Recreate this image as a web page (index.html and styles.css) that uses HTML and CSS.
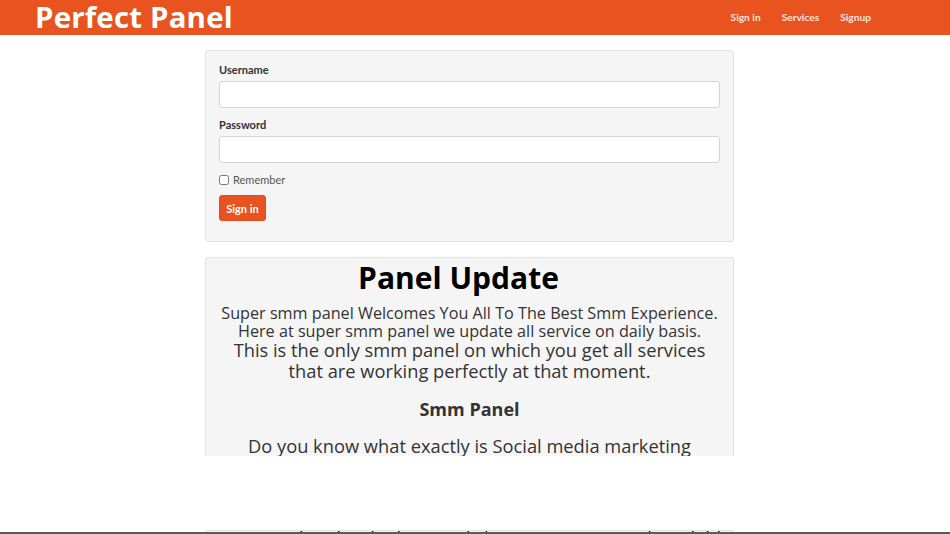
FILE: index.html
```html
<!DOCTYPE html>
<html lang="en">
<head>
<meta charset="utf-8">
<title>Perfect Panel</title>
<link rel="stylesheet" href="styles.css">
</head>
<body>
<nav class="navbar">
  <a class="brand" href="#">Perfect Panel</a>
  <ul class="nav">
    <li><a href="#">Sign in</a></li>
    <li><a href="#">Services</a></li>
    <li><a href="#">Signup</a></li>
  </ul>
</nav>
<div class="page">
  <div class="container">
    <form class="well login">
      <label class="label" for="u">Username</label>
      <input class="input" id="u" type="text">
      <label class="label" for="p">Password</label>
      <input class="input" id="p" type="password">
      <label class="check"><input type="checkbox" class="box"> Remember</label>
      <button class="btn" type="button">Sign in</button>
    </form>
    <div class="well content">
      <h1 class="title">Panel Update</h1>
      <p class="p1">Super smm panel Welcomes You All To The Best Smm Experience.<br>Here at super smm panel we update all service on daily basis.</p>
      <p class="p2">This is the only smm panel on which you get all services<br>that are working perfectly at that moment.</p>
      <h2 class="sub">Smm Panel</h2>
      <p class="p3">Do you know what exactly is Social media marketing</p>
    </div>
    <div class="well next">
      <p class="p3">Smm panel and is the best and cheapest smm panel available</p>
    </div>
  </div>
</div>
<div class="bottom-bar"></div>
</body>
</html>
```
FILE: styles.css
```css
* { box-sizing: border-box; }
html, body { margin: 0; padding: 0; }
body {
  width: 950px;
  height: 534px;
  overflow: hidden;
  background: #fff;
  font-family: "Open Sans", "Noto Sans", sans-serif;
  color: #333;
}
.navbar {
  height: 35px;
  background: #e8531f;
  display: flex;
  align-items: center;
  justify-content: space-between;
  padding: 0 79px 0 35px;
}
.brand {
  color: #fff;
  text-decoration: none;
  font-weight: 700;
  font-size: 29.4px;
  line-height: 35px;
  letter-spacing: 0.2px;
  margin-top: -1px;
}
.nav {
  list-style: none;
  margin: -2px 0 0;
  padding: 0;
  display: flex;
  gap: 21px;
  line-height: 14px;
}
.nav li { line-height: 14px; }
.nav a {
  display: block;
  color: #fbe3da;
  text-decoration: none;
  font-family: Lato, "Open Sans", sans-serif;
  font-size: 10.2px;
  font-weight: 700;
  line-height: 14px;
}
.page {
  padding: 15px 11px 0 0;
  display: flex;
  justify-content: center;
}
.container {
  width: 529px;
}
.well {
  background: #f5f5f5;
  border: 1px solid #e3e3e3;
  border-radius: 3px;
}
.login {
  display: flex;
  flex-direction: column;
  align-items: flex-start;
  padding: 12px 13px 20px;
  margin-bottom: 15px;
}
.label {
  font-family: Lato, "Open Sans", sans-serif;
  font-size: 11px;
  font-weight: 700;
  color: #333;
  line-height: 14px;
  margin-bottom: 4px;
}
.input {
  width: 100%;
  height: 27px;
  background: #fff;
  border: 1px solid #d4d4d4;
  border-radius: 3px;
  margin: 0 0 10px;
}
.check {
  display: flex;
  align-items: center;
  gap: 4px;
  font-family: Lato, "Open Sans", sans-serif;
  font-size: 11px;
  color: #555;
  line-height: 14px;
  margin: 0 0 8px;
}
.box {
  margin: 0;
  width: 10px;
  height: 10px;
}
.btn {
  background: #e8531f;
  color: #fff;
  border: 1px solid #e04d1a;
  border-radius: 3px;
  font-family: Lato, "Open Sans", sans-serif;
  font-size: 11px;
  font-weight: 700;
  width: 47px;
  height: 26px;
  padding: 0;
}
.content {
  height: 199px;
  overflow: hidden;
  border-bottom: none;
  border-radius: 3px 3px 0 0;
  text-align: center;
  padding: 0 12px;
}
.title {
  margin: 0 0 7px;
  padding: 1px 22px 0 0;
  font-size: 30px;
  line-height: 38px;
  font-weight: 700;
  color: #000;
}
.p1 {
  margin: 0;
  font-size: 16.2px;
  line-height: 18px;
  color: #333;
}
.p2 {
  margin: 0;
  font-size: 18.3px;
  line-height: 20.5px;
  color: #333;
}
.sub {
  margin: 17px 0 0;
  font-size: 18px;
  line-height: 22px;
  font-weight: 700;
  color: #333;
}
.p3 {
  margin: 14px 0 0;
  font-size: 18.3px;
  line-height: 24px;
  color: #333;
  white-space: nowrap;
}
.next {
  margin-top: 74px;
  height: 20px;
  overflow: hidden;
  text-align: center;
  border-bottom: none;
}
.next .p3 {
  margin-top: -5px;
  color: #111;
}
.bottom-bar {
  position: fixed;
  left: 0;
  right: 0;
  bottom: 0;
  height: 2px;
  background: #5a5a5a;
}
```
